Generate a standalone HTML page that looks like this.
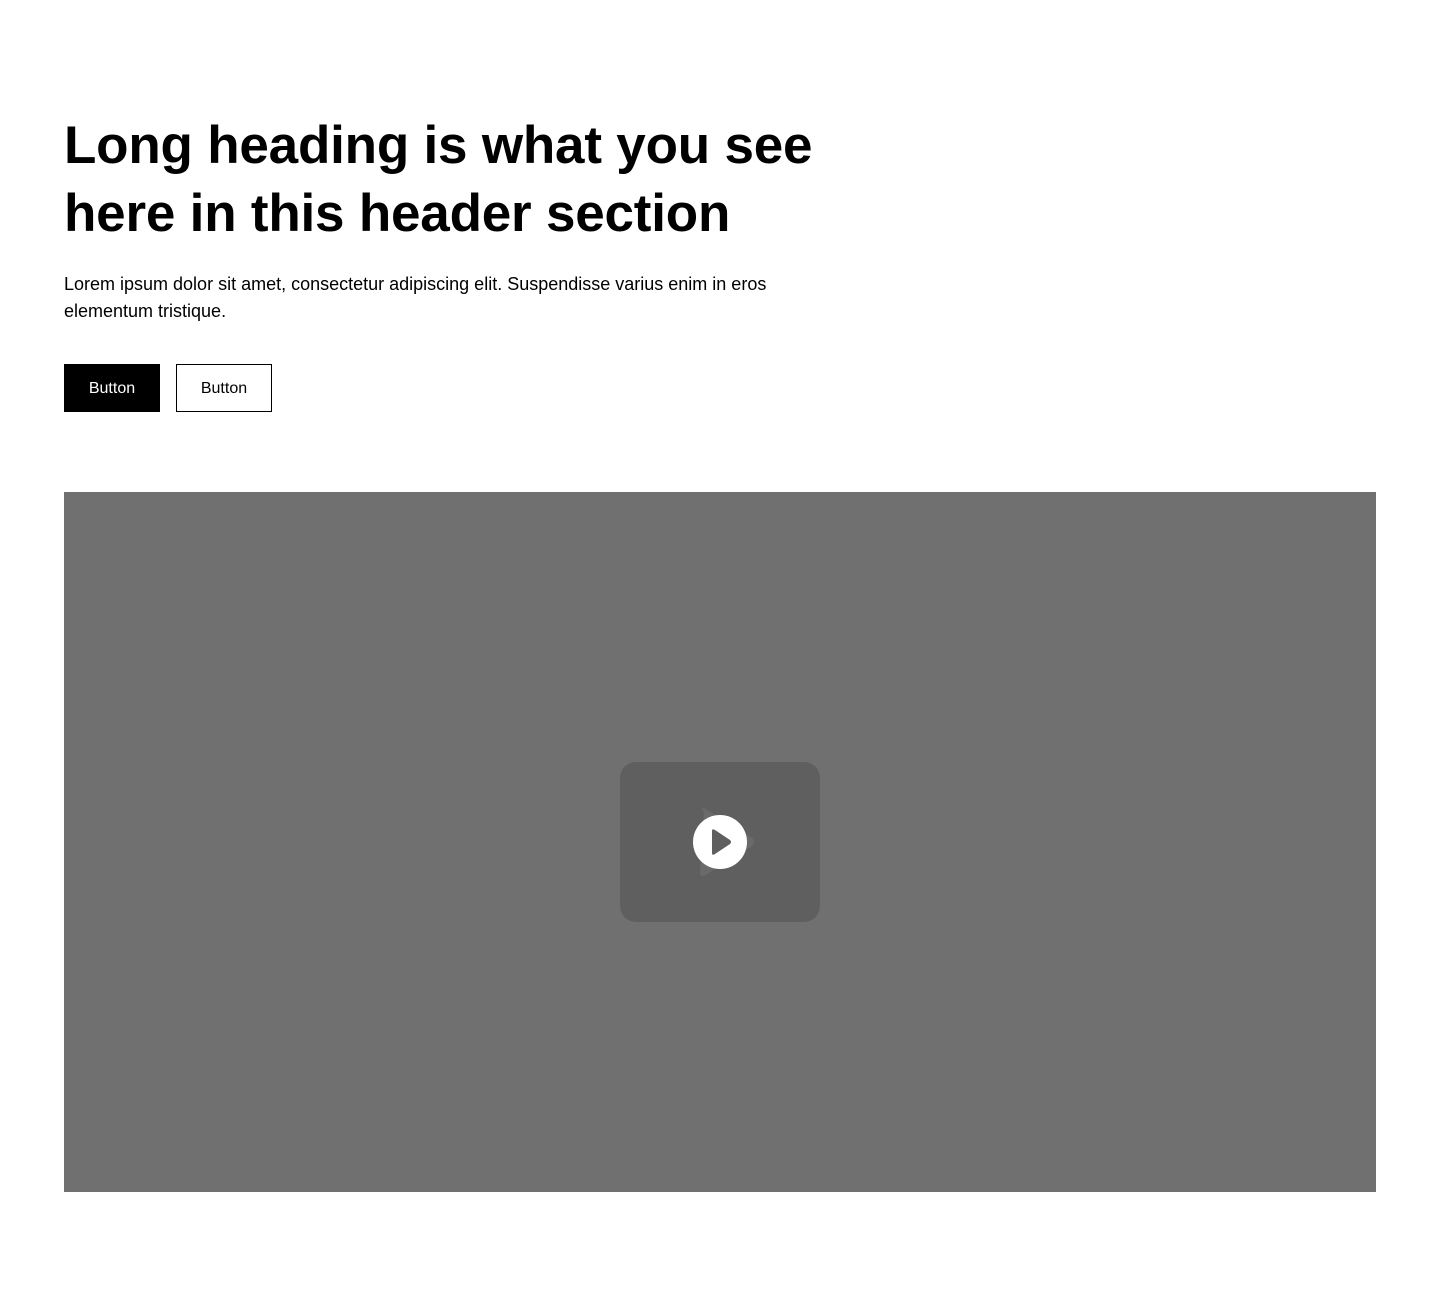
<!DOCTYPE html>
<html><head><style>
body{margin:0;background:#fff;font-family:"Liberation Sans",Arial,sans-serif;color:#000}
h1{position:absolute;left:64px;top:112px;margin:0;font-size:53px;line-height:68px;font-weight:700;width:800px;letter-spacing:-0.2px}
p{position:absolute;left:64px;top:271px;margin:0;font-size:18px;line-height:27px;width:760px}
.b{position:absolute;top:364px;height:48px;width:96px;box-sizing:border-box;font-size:16px;display:flex;align-items:center;justify-content:center;padding-top:1px}
.v{position:absolute;left:64px;top:492px;width:1312px;height:700px;background:#707070}
</style></head><body>
<h1>Long heading is what you see here in this header section</h1>
<p>Lorem ipsum dolor sit amet, consectetur adipiscing elit. Suspendisse varius enim in eros elementum tristique.</p>
<div class="b" style="left:64px;background:#000;color:#fff">Button</div>
<div class="b" style="left:176px;border:1px solid #000">Button</div>
<div class="v"></div>
<svg style="position:absolute;left:620px;top:762px" width="200" height="160">
<rect width="200" height="160" rx="16" fill="#5f5f5f"/>
<path d="M84 50 Q80 46 84 46 L132 76 Q136 80 132 84 L84 114 Q80 114 80 110 Z" fill="#6a6a6a"/>
<circle cx="100" cy="80" r="27" fill="#fff"/>
<path d="M92 69 Q92 66 95 68 L110 78 Q112 80 110 82 L95 92 Q92 94 92 91 Z" fill="#5f5f5f"/>
</svg>
</body></html>
